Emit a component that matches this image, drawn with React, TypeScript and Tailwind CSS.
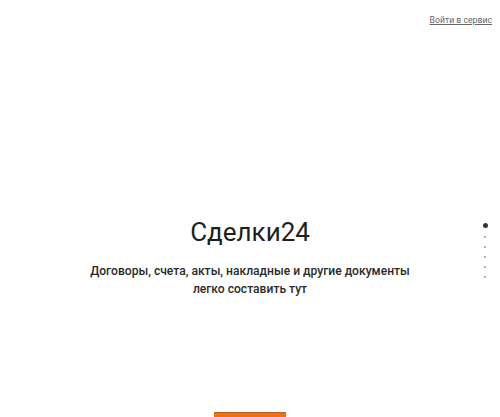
const dots = [0, 1, 2, 3, 4];

const App = () => {
  return (
    <div
      className="relative h-[417px] w-full overflow-hidden bg-white text-[#1f1f1f]"
      style={{ fontFamily: "Roboto, 'Liberation Sans', sans-serif" }}
    >
      <header className="flex h-[40px] items-center justify-end pr-[8px]">
        <a href="#" className="text-[8.7px] leading-none text-[#666] underline">
          Войти в сервис
        </a>
      </header>

      <main className="flex flex-col items-center pt-[176px]">
        <h1 className="text-[26px] font-normal leading-[32px]">Сделки24</h1>
        <p className="mt-[14px] text-center text-[12.1px] font-medium leading-[18px] text-[#2b2b2b]">
          Договоры, счета, акты, накладные и другие документы
          <br />
          легко составить тут
        </p>
        <button
          aria-label="Начать"
          className="mt-[114px] h-[40px] w-[72px] border-t border-[#b5632a] bg-[#f26f0f]"
        />
      </main>

      <nav className="absolute right-[12px] top-[223px] flex w-[6px] flex-col items-center">
        <span className="h-[5px] w-[5px] rounded-full bg-[#333]" />
        {dots.map((d) => (
          <span key={d} className="mt-[8px] h-[2px] w-[2px] rounded-full bg-[#999]" />
        ))}
      </nav>
    </div>
  );
};

export default App;
